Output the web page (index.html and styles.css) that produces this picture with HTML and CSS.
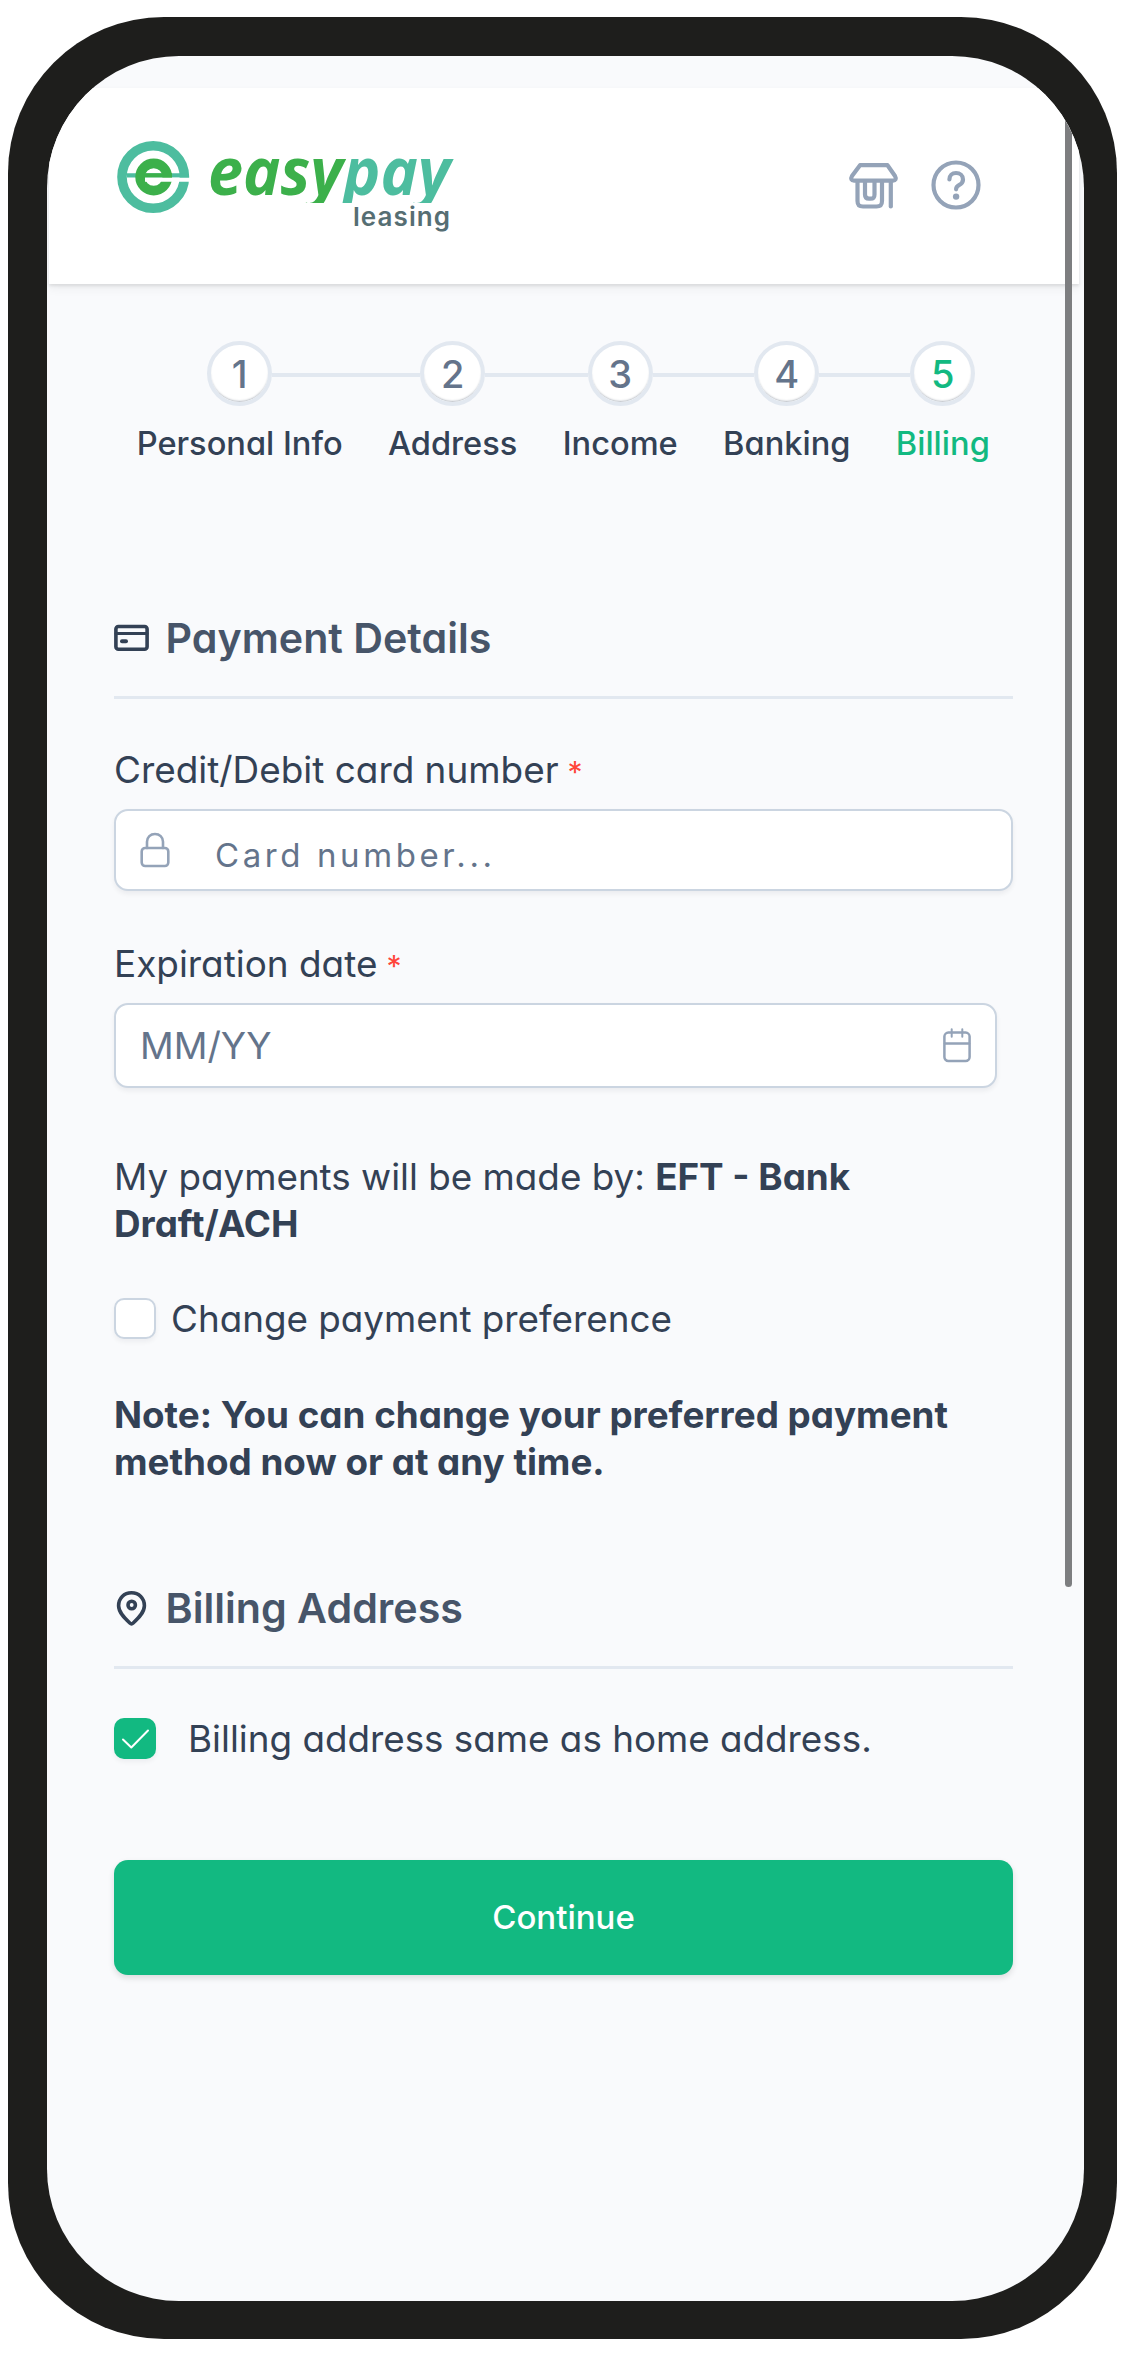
FILE: index.html
```html
<!DOCTYPE html>
<html lang="en">
<head>
<meta charset="utf-8">
<title>EasyPay Leasing – Billing</title>
<link rel="stylesheet" href="styles.css">
</head>
<body>
<div class="phone">
  <div class="screen">
    <header class="header">
      <svg class="logo" viewBox="0 0 340 96" width="340" height="96" role="img" aria-label="easypay leasing">
        <defs>
          <clipPath id="word-clip"><path d="M85 0H340V56L332 64H85Z"/></clipPath>
        </defs>
        <g fill="none">
          <circle cx="38.2" cy="38" r="31.2" stroke="#4dbd9f" stroke-width="9.6"/>
          <path d="M12 36.4H70" stroke="#4dbd9f" stroke-width="4.4"/>
          <circle cx="38.7" cy="38" r="13.6" stroke="#3cb04b" stroke-width="9.6"/>
          <path d="M24 36.4H57" stroke="#3cb04b" stroke-width="4.4"/>
          <path d="M30 40.800H76" stroke="#fff" stroke-width="4"/>
        </g>
        <g clip-path="url(#word-clip)">
          <text class="wordmark" x="93" y="55.5" textLength="242.500" lengthAdjust="spacingAndGlyphs"><tspan fill="#3cb04b">easy</tspan><tspan fill="#4dbd9f">pay</tspan></text>
        </g>
        <text class="tagline" x="238" y="86.500" textLength="97" lengthAdjust="spacing">leasing</text>
      </svg>
      <div class="header-icons">
        <svg width="51" height="52" viewBox="0 0 51 52" fill="none" stroke="#94a3b8" stroke-width="4.200" stroke-linecap="round" stroke-linejoin="round">
          <path d="M12 5.2H39.5L47 16C48.600 18.800 47.500 20.600 45 20.600H6C3.400 20.600 2.400 18.800 4 16Z"/>
          <path d="M9.500 21V41C9.500 45 11 46.500 15 46.500H28.500C32.500 46.500 34 45 34 41V21"/>
          <path d="M17 21V34.500C17 37.500 18.200 38.700 21 38.700H22.500C25.500 38.700 26.500 37.500 26.500 34.500V21"/>
          <path d="M42.800 21V46.500"/>
        </svg>
        <svg width="50" height="50" viewBox="0 0 50 50" fill="none" stroke="#94a3b8" stroke-width="4.200" stroke-linecap="round" stroke-linejoin="round">
          <circle cx="25" cy="25" r="22.500"/>
          <path d="M18.400 19.500C18.400 15.500 21.200 13 25 13C29 13 32 15.700 32 19.500C32 22.600 30.300 24 28 25.200C26 26.300 25.100 27.200 25.100 29.300"/>
          <circle cx="25.100" cy="36.600" r="3.200" fill="#94a3b8" stroke="none"/>
        </svg>
      </div>
    </header>

    <main class="content">
      <ol class="steps">
        <li class="step"><span class="marker"><span class="number">1</span></span><span class="step-label">Personal Info</span></li>
        <li class="step"><span class="marker"><span class="number">2</span></span><span class="step-label">Address</span></li>
        <li class="step"><span class="marker"><span class="number">3</span></span><span class="step-label">Income</span></li>
        <li class="step"><span class="marker"><span class="number">4</span></span><span class="step-label">Banking</span></li>
        <li class="step current"><span class="marker"><span class="number">5</span></span><span class="step-label">Billing</span></li>
      </ol>

      <h2 class="section-title">
        <svg width="36" height="36" viewBox="0 0 36 36" fill="none" stroke="#334155" stroke-width="3.600" stroke-linecap="round" stroke-linejoin="round">
          <rect x="1.900" y="6.500" width="31.200" height="22.700" rx="2.500"/>
          <path d="M2 13.600H33" stroke-width="3"/>
          <path d="M8 21.200H12" stroke-width="4"/>
        </svg>
        <span>Payment Details</span>
      </h2>

      <label class="field-label" for="card">Credit/Debit card number<span class="required">*</span></label>
      <div class="field card-field">
        <svg width="30" height="36" viewBox="0 0 30 36" fill="none" stroke="#94a3b8" stroke-width="2.600" stroke-linecap="round" stroke-linejoin="round">
          <rect x="1.700" y="16" width="26.600" height="18" rx="3.500"/>
          <path d="M7 16V9.800C7 5 10.500 2 15 2C19.500 2 23 5 23 9.800V16"/>
        </svg>
        <input id="card" class="card-input" type="text" placeholder="Card number...">
      </div>

      <label class="field-label" for="expiry">Expiration date<span class="required">*</span></label>
      <div class="field date-field">
        <input id="expiry" class="date-input" type="text" placeholder="MM/YY">
        <svg width="28" height="36" viewBox="0 0 28 36" fill="none" stroke="#94a3b8" stroke-width="2.500" stroke-linecap="round" stroke-linejoin="round">
          <rect x="1.400" y="5.600" width="25.200" height="28.500" rx="4"/>
          <path d="M2 16.400H26"/>
          <path d="M8.700 2.300V9.800M19.300 2.300V9.800" stroke-width="2"/>
        </svg>
      </div>

      <p class="text payment-method">My payments will be made by: <b>EFT - Bank Draft/ACH</b></p>
      <div class="check-row preference">
        <span class="checkbox"></span>
        <span class="text">Change payment preference</span>
      </div>
      <p class="text note"><b>Note: You can change your preferred payment method now or at any time.</b></p>

      <h2 class="section-title billing-title">
        <svg width="36" height="36" viewBox="0 0 36 36" fill="none" stroke="#334155" stroke-width="3.600" stroke-linecap="round" stroke-linejoin="round">
          <path d="M17.500 2.800C10 2.800 4.600 8.300 4.600 15.700C4.600 22.500 11 28.500 15.800 33C16.900 34 18.100 34 19.200 33C24 28.500 30.400 22.500 30.400 15.700C30.400 8.300 25 2.800 17.500 2.800Z"/>
          <circle cx="17.700" cy="15" r="3.700"/>
        </svg>
        <span>Billing Address</span>
      </h2>
      <div class="check-row same-address">
        <span class="checkbox checked">
          <svg width="42" height="41" viewBox="0 0 42 41" fill="none" stroke="#fff" stroke-width="2" stroke-linecap="round" stroke-linejoin="round"><path d="M9 21.500L17.300 29.500L34 12.500"/></svg>
        </span>
        <span class="text">Billing address same as home address.</span>
      </div>
      <button class="continue" type="button">Continue</button>
    </main>
    <div class="scrollbar"></div>
  </div>
</div>
</body>
</html>
```
FILE: styles.css
```css
* { box-sizing: border-box; }

body {
  margin: 0;
  background: #fff;
  color: #334155;
  font-family: Inter, "Liberation Sans", sans-serif;
  font-feature-settings: "cv11";
}

.phone {
  width: 1109px;
  height: 2322px;
  margin: 17px 8px;
  padding: 38.5px 33.5px 38.5px 39px;
  border-radius: 156px;
  background: #1e1e1c;
}

.screen {
  position: relative;
  height: 100%;
  padding-top: 32.5px;
  border-radius: 132px;
  overflow: hidden;
  background: #f9fafc;
}

.header {
  display: flex;
  justify-content: space-between;
  height: 196px;
  margin: 0 5px 0 2px;
  padding: 51px 98px 0 66px;
  background: #fff;
  box-shadow: 0 2px 3px rgba(0, 0, 0, .09), 0 5px 9px rgba(0, 0, 0, .05);
}
.logo { display: block; }
.wordmark { font: italic 700 67px "Open Sans", sans-serif; }
.tagline { font: 600 26px Inter, sans-serif; font-feature-settings: normal; fill: #566e73; }
.header-icons { display: flex; gap: 32px; padding-top: 21px; }

.content { padding: 57px 70.5px 0 67px; }

.steps {
  display: flex;
  margin: 0 0 150px;
  padding: 0;
  list-style: none;
}
.step {
  display: flex;
  flex-direction: column;
  align-items: center;
  gap: 17px;
}
.marker {
  display: grid;
  grid-template-columns: 1fr 65px 1fr;
  align-items: center;
  width: 100%;
}
.marker::before,
.marker::after {
  content: "";
  height: 4.5px;
  margin-top: 3px;
  background: #e2e8f0;
}
.step:first-child .marker::before,
.step:last-child .marker::after { background: none; }
.number {
  display: flex;
  align-items: center;
  justify-content: center;
  height: 65px;
  border: 4.5px solid #e2e8f0;
  border-radius: 50%;
  background: #fff;
  box-shadow: inset 0 -2px 2px -1px rgba(51, 65, 85, .35);
  color: #64748b;
  font-size: 38px;
  font-weight: 500;
}
.step-label {
  padding: 0 22.7px;
  font-size: 32.6px;
  font-weight: 500;
  line-height: 41px;
  white-space: nowrap;
}
.current .number,
.current .step-label { color: #12b981; }

.section-title {
  display: flex;
  align-items: center;
  gap: 15.5px;
  margin: 0 0 46px;
  padding-bottom: 34px;
  border-bottom: 3px solid #e2e8f0;
  color: #475569;
  font-size: 41.2px;
  font-weight: 600;
  line-height: 48px;
}

.field-label {
  display: block;
  height: 48px;
  margin-bottom: 16px;
  font-size: 36.9px;
  line-height: 49px;
}
.required {
  margin-left: 9px;
  color: #ff453a;
  font-size: 30px;
  line-height: 1;
}
.field {
  display: flex;
  align-items: center;
  border: 2.5px solid #cbd5e1;
  border-radius: 14px;
  background: #fff;
  box-shadow: 0 3px 5px rgba(15, 23, 42, .06);
}
.field input {
  flex: 1;
  min-width: 0;
  padding: 0;
  border: 0;
  outline: 0;
  background: none;
  font-family: inherit;
}
.field input::placeholder { color: #64748b; opacity: 1; }
.card-field {
  gap: 45px;
  height: 81.5px;
  margin-bottom: 48px;
  padding: 0 24px;
}
.field .card-input {
  padding-top: 10px;
  font-size: 33px;
  letter-spacing: 3.6px;
  font-feature-settings: normal;
}
.date-field {
  height: 85px;
  margin: 0 16.5px 65.5px 0;
  padding: 0 24px;
}
.date-input { font-size: 37.3px; font-feature-settings: inherit; }

.text { margin: 0; font-size: 36.8px; line-height: 47px; }
.payment-method { margin-bottom: 48px; }
.check-row { display: flex; align-items: center; }
.checkbox {
  width: 42px;
  height: 41px;
  border: 2.5px solid #cbd5e1;
  border-radius: 10px;
  background: #fff;
  box-shadow: 0 3px 5px rgba(15, 23, 42, .05);
}
.checkbox.checked { border: 0; background: #12b981; }
.checked svg { display: block; }
.preference { gap: 15px; margin-bottom: 49px; }
.note { margin-bottom: 98.5px; }
.same-address { gap: 32px; margin-bottom: 98px; }

.continue {
  display: block;
  width: 100%;
  height: 115px;
  border: 0;
  border-radius: 14px;
  background: #12b981;
  box-shadow: 0 3px 6px rgba(0, 0, 0, .12);
  color: #fff;
  font: 500 33px Inter, sans-serif;
}

.scrollbar {
  position: absolute;
  top: 0;
  right: 11.5px;
  width: 7.5px;
  height: 1531px;
  border-radius: 4px;
  background: #7d7e80;
}
```
